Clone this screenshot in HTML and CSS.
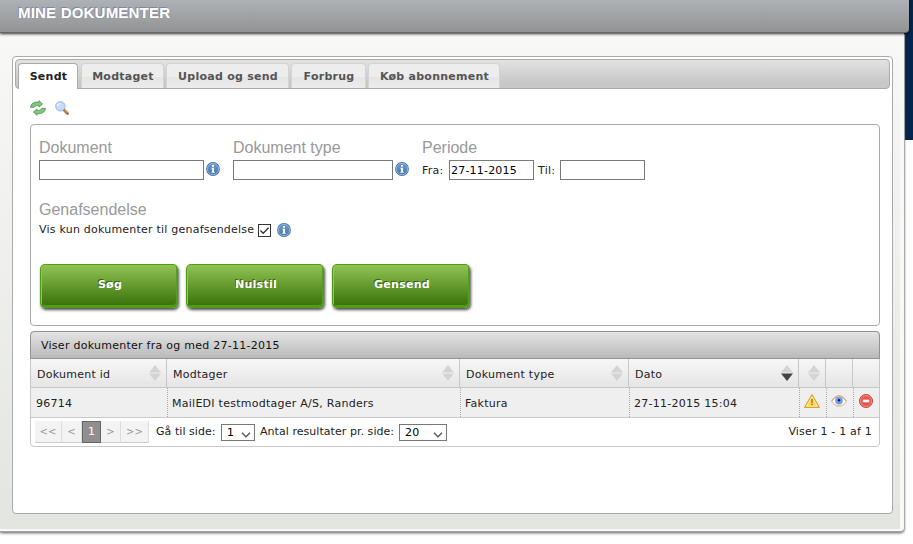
FILE: index.html
```
<!DOCTYPE html>
<html lang="da">
<head>
  <meta charset="UTF-8">
  <title>Mine dokumenter</title>
  <link rel="stylesheet" href="styles.css">
</head>
<body>
  <svg class="symbols" width="0" height="0">
    <defs>
      <linearGradient id="blue" x1="0" y1="0" x2="0" y2="1">
        <stop offset="0" stop-color="#6d9bd0"/>
        <stop offset="1" stop-color="#4676b0"/>
      </linearGradient>
      <symbol id="info" viewBox="0 0 14 14">
        <circle cx="7" cy="7" r="6.9" fill="#416fa6"/>
        <circle cx="7" cy="7" r="5.7" fill="url(#blue)" stroke="#a3c2e3" stroke-width=".8"/>
        <path d="M6 3h2v1.8H6zM5.4 5.7H8v4h.8v1H5.3v-1h.8v-3h-.7z" fill="#fff"/>
      </symbol>
      <symbol id="sort" viewBox="0 0 12 16">
        <path class="up" d="M6 0l6 7.4H0z"/>
        <path class="down" d="M0 8.6h12L6 16z"/>
      </symbol>
      <symbol id="chevron" viewBox="0 0 10 6">
        <path d="M1 .8l4 4 4-4" fill="none" stroke="#555" stroke-width="1.3"/>
      </symbol>
    </defs>
  </svg>

  <div class="page">
    <div class="header"><h1>MINE DOKUMENTER</h1></div>
    <div class="content">
      <div class="tabs">
        <ul class="tabs-nav">
          <li class="active" id="tab-sendt"><span>Sendt</span></li>
          <li id="tab-modtaget"><span>Modtaget</span></li>
          <li id="tab-upload"><span>Upload og send</span></li>
          <li id="tab-forbrug"><span>Forbrug</span></li>
          <li id="tab-kob"><span>Køb abonnement</span></li>
        </ul>

        <div class="toolbar">
          <svg width="16" height="16" viewBox="0 0 16 16" stroke="#3f9149" stroke-width=".8" stroke-linejoin="round">
            <path d="M.6 7.3C.8 3.6 4.2 1.7 9 2.2V.7L12.6 4 9 7V5.6C6.6 5.2 5 5.8 4.2 7.3z" fill="#85c57f"/>
            <path d="M15.4 8.3C15.2 12.2 11.8 14.1 7 13.6v1.7L3.4 12 7 8.9v1.5c2.4.4 4-.4 4.8-2.1z" fill="#85c57f"/>
          </svg>
          <svg width="14" height="14" viewBox="0 0 14 14">
            <path d="M9 9l3.5 3.5" stroke="#ad6f3c" stroke-width="2.8" stroke-linecap="round"/>
            <path d="M9.2 8.7l3 3" stroke="#e1ad75" stroke-width="1"/>
            <circle cx="5.4" cy="5.3" r="4.7" fill="#c3dcf9" stroke="#9db6dc"/>
            <path d="M2.6 5.3a2.8 2.8 0 0 1 2.8-2.6" fill="none" stroke="#eef6ff" stroke-width="1.3"/>
          </svg>
        </div>

        <div class="filter">
          <div class="fields">
            <div class="field field-doc">
              <h2>Dokument</h2>
              <div class="line"><input type="text" class="in-doc"><svg class="info"><use href="#info"/></svg></div>
            </div>
            <div class="field field-type">
              <h2>Dokument type</h2>
              <div class="line"><input type="text" class="in-type"><svg class="info"><use href="#info"/></svg></div>
            </div>
            <div class="field">
              <h2>Periode</h2>
              <div class="line">
                <label class="fra">Fra:</label><input type="text" class="in-date" value="27-11-2015">
                <label class="til">Til:</label><input type="text" class="in-date">
              </div>
            </div>
          </div>
          <div class="resend">
            <h2>Genafsendelse</h2>
            <div class="line">
              <label>Vis kun dokumenter til genafsendelse</label>
              <svg class="check" viewBox="0 0 13 13"><rect x=".5" y=".5" width="12" height="12" fill="#fff" stroke="#333"/><path d="M2.4 6.5l2.8 2.8 5.4-5.5" fill="none" stroke="#333" stroke-width="1.3"/></svg>
              <svg class="info"><use href="#info"/></svg>
            </div>
          </div>
          <div class="buttons">
            <button type="button">Søg</button>
            <button type="button">Nulstil</button>
            <button type="button">Gensend</button>
          </div>
        </div>

        <div class="grid">
          <div class="grid-title">Viser dokumenter fra og med 27-11-2015</div>
          <div class="row head">
            <div><span>Dokument id</span><svg class="sort"><use href="#sort"/></svg></div>
            <div><span>Modtager</span><svg class="sort"><use href="#sort"/></svg></div>
            <div><span>Dokument type</span><svg class="sort"><use href="#sort"/></svg></div>
            <div><span>Dato</span><svg class="sort desc"><use href="#sort"/></svg></div>
            <div><svg class="sort"><use href="#sort"/></svg></div>
            <div></div>
            <div></div>
          </div>
          <div class="row item">
            <div>96714</div>
            <div>MailEDI testmodtager A/S, Randers</div>
            <div>Faktura</div>
            <div>27-11-2015 15:04</div>
            <div class="icon">
              <svg width="16" height="14" viewBox="0 0 16 14">
                <path d="M8 .8L15.3 13.3H.7z" fill="#ffe680" stroke="#d9a02c" stroke-width="1.2" stroke-linejoin="round"/>
                <path d="M8 2.9l5.3 9.2H2.7z" fill="#f8d34e" stroke="#fff4bd" stroke-width=".8"/>
                <path d="M7.2 5h1.7l-.3 4H7.4zM7.2 9.8h1.6v1.5H7.2z" fill="#ad7713"/>
              </svg>
            </div>
            <div class="icon">
              <svg width="16" height="14" viewBox="0 0 16 14">
                <path d="M.4 7.2C3 2.8 5.3 1.5 8 1.5s5.2 1.7 7.6 5.7c-2.2 3.5-4.6 5-7.6 5S2.7 10.7.4 7.2z" fill="#f2d3b8" stroke="#d2ab8b" stroke-width=".7"/>
                <path d="M1.3 7.4C3.5 4.5 5.5 3.3 8 3.3s4.5 1.2 6.8 4.1c-2 2.4-4.1 3.5-6.8 3.5s-4.8-1.1-6.7-3.5z" fill="#fff"/>
                <path d="M.9 7.2C3 4 5.2 2.8 8 2.8s5 1.2 7.2 4.4" fill="none" stroke="#b39580" stroke-width=".7"/>
                <circle cx="8" cy="6.8" r="3.8" fill="#6f9fe8"/>
                <circle cx="8" cy="6.2" r="1.2" fill="#101c3c"/>
              </svg>
            </div>
            <div class="icon">
              <svg width="14" height="14" viewBox="0 0 14 14">
                <circle cx="7" cy="7" r="6.5" fill="#e8564a" stroke="#c9453b"/>
                <circle cx="7" cy="7" r="5.5" fill="none" stroke="#f29c92" stroke-width=".8"/>
                <path d="M3.8 5.7h6.4v2.6H3.8z" fill="#fff"/>
              </svg>
            </div>
          </div>
          <div class="pager">
            <div class="pages">
              <span>&lt;&lt;</span><span>&lt;</span><span class="current">1</span><span>&gt;</span><span>&gt;&gt;</span>
            </div>
            <label class="goto">Gå til side:</label>
            <div class="select sel-page">1<svg><use href="#chevron"/></svg></div>
            <label class="per">Antal resultater pr. side:</label>
            <div class="select sel-count">20<svg><use href="#chevron"/></svg></div>
            <span class="summary">Viser 1 - 1 af 1</span>
          </div>
        </div>
      </div>
    </div>
  </div>
</body>
</html>
```
FILE: styles.css
```
* {
  box-sizing: border-box;
}
body {
  margin: 0;
  height: 544px;
  overflow: hidden;
  font-family: Verdana, "DejaVu Sans", sans-serif;
  font-size: 11px;
  letter-spacing: 0.26px;
  color: #222;
  background: linear-gradient(#04264d, #04254b) right top / 20px 140px no-repeat #fff;
}
h1, h2, ul {
  margin: 0;
  padding: 0;
}
svg {
  display: block;
  flex: none;
}
.symbols {
  position: absolute;
}
.page {
  width: 909px;
}
.header {
  position: relative;
  height: 33px;
  padding: 4px 18px 0;
  background: linear-gradient(#aeb1b5, #929494);
  border-bottom: 1px solid #666;
  border-radius: 0 0 4px 0;
  box-shadow: 0 1px 3px rgba(0, 0, 0, 0.8);
}
h1 {
  font: bold 15px/18px Arial, "Liberation Sans", sans-serif;
  letter-spacing: 0.2px;
  color: #fff;
  text-shadow: -1px -1px 0 #8386a0;
}
.content {
  width: 904px;
  height: 498px;
  padding: 23px 8px 0 12px;
  background: linear-gradient(#f8f9f7, #e3e5e0);
  border-right: 4px solid #f8f8f7;
  border-bottom: 2px solid #f8f8f7;
  border-radius: 0 0 4px 0;
  box-shadow: 1px 1px 1px #aaa, 0 2px 3px rgba(0, 0, 0, 0.65);
}

/* Faneblade */
.tabs {
  width: 881px;
  height: 458px;
  padding: 2px;
  background: #fff;
  border: 1px solid #aaa;
  border-radius: 4px;
}
.tabs-nav {
  display: flex;
  gap: 2px;
  height: 30px;
  padding: 3px 2px 0;
  list-style: none;
  background: linear-gradient(#e2e2e2, #c8c8c8 80%);
  border: 1px solid #aaa;
  border-radius: 4px;
}
.tabs-nav li {
  height: 25px;
  padding: 6px 0 0 1px;
  text-align: center;
  font-weight: bold;
  line-height: 14px;
  color: #555;
  background: linear-gradient(#ededed 55%, #e5e5e5 56%, #ececec);
  border: 1px solid #d3d3d3;
  border-bottom: 0;
  border-radius: 4px 4px 0 0;
}
.tabs-nav li.active {
  height: 26px;
  margin-right: 1px;
  color: #212121;
  background: #fff;
  border-color: #aaa;
}
#tab-sendt { width: 60px; }
#tab-modtaget { width: 83px; }
#tab-upload { width: 123px; }
#tab-forbrug { width: 75px; }
#tab-kob { width: 132px; }
.toolbar {
  display: flex;
  gap: 9px;
  height: 35px;
  padding: 11px 15px 0;
}
.toolbar svg + svg {
  margin-top: 1px;
}

/* Søgefelter */
.filter {
  width: 850px;
  height: 202px;
  margin-left: 15px;
  padding: 13px 8px 0;
  border: 1px solid #aaa;
  border-radius: 4px;
}
h2 {
  font: 16px/20px Arial, "Liberation Sans", sans-serif;
  letter-spacing: 0;
  color: #999;
}
.fields {
  display: flex;
  height: 62px;
}
.field-doc { width: 194px; }
.field-type { width: 189px; }
.line {
  display: flex;
  align-items: center;
  height: 20px;
}
.fields .line {
  margin-top: 2px;
}
input {
  height: 20px;
  padding: 0 1px;
  font: 11px Verdana, "DejaVu Sans", sans-serif;
  letter-spacing: 0.2px;
  color: #000;
  background: #fff;
  border: 1px solid #7a7a7a;
  border-radius: 0;
}
.in-doc { width: 165px; }
.in-type { width: 160px; }
.in-date { width: 85px; }
.info {
  width: 14px;
  height: 14px;
  margin-left: 2px;
}
.fields .info {
  margin-bottom: 2px;
}
.fra { width: 27px; }
.til {
  width: 22px;
  margin-left: 4px;
}
.resend label {
  width: 215px;
  padding-bottom: 2px;
  letter-spacing: 0.22px;
  white-space: nowrap;
}
.check {
  width: 13px;
  height: 13px;
  margin: 1px 4px 0 4px;
}
.resend .info {
  margin-left: 2px;
}
.buttons {
  display: flex;
  gap: 8px;
  margin: 24px 0 0 1px;
}
button {
  width: 138px;
  height: 44px;
  padding: 0 0 3px 2px;
  font: bold 11px Verdana, "DejaVu Sans", sans-serif;
  letter-spacing: 0.26px;
  color: #fff;
  text-shadow: -1px -1px 0 #376412;
  background: linear-gradient(#92c353, #38720b);
  border: 1px solid #509b14;
  border-bottom-width: 2px;
  border-radius: 5px;
  box-shadow: inset 1px 1px 0 #8cc84f, inset -1px -1px 0 #539f19, 1px 2px 3px rgba(0, 0, 0, 0.7);
}

/* Resultatliste */
.grid {
  width: 850px;
  margin: 5px 0 0 15px;
  border: 1px solid #c8c8c8;
  border-radius: 4px;
}
.grid-title {
  height: 28px;
  margin: -1px -1px 0;
  padding-left: 10px;
  line-height: 27px;
  color: #111;
  background: linear-gradient(#e4e4e4, #b9b9b9);
  border: 1px solid #929292;
  border-radius: 4px 4px 0 0;
}
.row {
  display: grid;
  grid-template-columns: 136px 293px 169px 170px 27px 27px 26px;
  border-bottom: 1px solid #c8c8c8;
}
.row > div {
  display: flex;
  align-items: center;
}
.head {
  height: 29px;
  background: linear-gradient(#f7f7f7, #e5e5e5);
}
.head > div {
  justify-content: space-between;
  padding: 0 5px 0 6px;
  border-right: 1px solid #c8c8c8;
}
.head span {
  padding-top: 2px;
}
.sort {
  width: 12px;
  height: 16px;
  margin-left: auto;
  color: #d4d4d4;
  fill: #d4d4d4;
}
.sort.desc {
  color: #444;
}
.down {
  fill: currentColor;
}
.item {
  grid-template-columns: 137px 293px 169px 170px 27px 27px 25px;
  height: 30px;
  background: #efefef;
}
.item > div {
  padding: 2px 0 0 4px;
  border-right: 1px dotted #aaa;
}
.item > div:first-child {
  padding-left: 5px;
}
.head > div:last-child,
.item > div:last-child {
  border-right: 0;
}
.item > .icon {
  justify-content: center;
  padding: 0 2px 3px 0;
}
.pager {
  display: flex;
  align-items: center;
  height: 28px;
  padding: 0 7px 0 4px;
}
.pages {
  display: flex;
  width: 114px;
}
.pages span {
  height: 22px;
  width: 20px;
  font-size: 10px;
  letter-spacing: 0;
  line-height: 21px;
  text-align: center;
  color: #999;
  background: #f3f3f3;
  border-right: 1px solid #ddd;
  border-bottom: 1px solid #ccc;
}
.pages span:first-child {
  width: 27px;
}
.pages span:last-child {
  width: 28px;
}
.pages .current {
  width: 19px;
  font-size: 11px;
  color: #fff;
  background: #8f8f8f;
  border: 1px solid #666;
  line-height: 20px;
}
.goto,
.per {
  padding-bottom: 1px;
  letter-spacing: 0.05px;
  white-space: nowrap;
}
.goto {
  width: 65px;
  margin-left: 7px;
}
.per {
  width: 139px;
  margin-left: 5px;
}
.select {
  display: flex;
  align-items: center;
  justify-content: space-between;
  height: 17px;
  padding: 0 3px 0 5px;
  color: #000;
  background: #fff;
  border: 1px solid #777;
}
.select svg {
  width: 10px;
  height: 6px;
  margin-top: 5px;
}
.sel-page { width: 34px; }
.sel-count { width: 48px; }
.summary {
  margin-left: auto;
  padding-bottom: 1px;
  letter-spacing: 0.2px;
}
```
